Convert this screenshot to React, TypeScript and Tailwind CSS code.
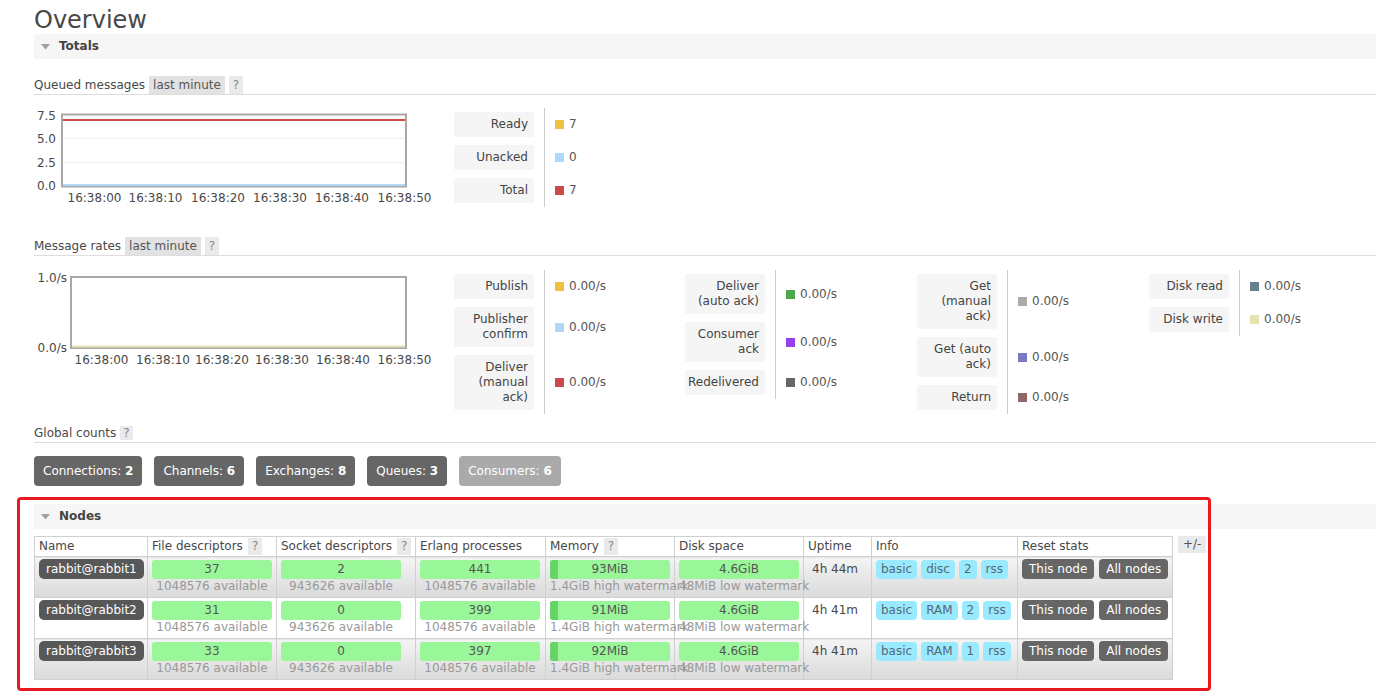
import React from "react";

type LegendItem = { lines: string[]; swatch: string; value: string };

function Legend({ items, width, top }: { items: LegendItem[]; width: string; top: string }) {
  return (
    <div className={`flex shrink-0 flex-col ${width} ${top}`}>
      {items.map((it, i) => (
        <div key={i} className="flex items-stretch">
          <div className="py-[4px]">
            <div className="w-[80px] rounded-[2px] bg-[#f5f5f5] py-[5px] pl-[2px] pr-[6px] text-right leading-[15px] text-[#444]">
              {it.lines.map((l, j) => (
                <div key={j} className="whitespace-nowrap">
                  {l}
                </div>
              ))}
            </div>
          </div>
          <div className="ml-[10px] flex items-center border-l border-[#cccccc] pl-[10px]">
            <span className={`inline-block h-[9px] w-[9px] ${it.swatch}`} />
            <span className="ml-[5px] text-[#555]">{it.value}</span>
          </div>
        </div>
      ))}
    </div>
  );
}

function SectionBar({ title, className = "" }: { title: string; className?: string }) {
  return (
    <div className={`flex h-[25px] items-center bg-[#f6f6f6] ${className}`}>
      <svg width="9" height="6" viewBox="0 0 9 6" className="ml-[7px]">
        <polygon points="0,0 9,0 4.5,5.5" fill="#a0a0a0" />
      </svg>
      <span className="ml-[9px] font-bold text-[#444]">{title}</span>
    </div>
  );
}

function SubHeader({ title, range, className = "" }: { title: string; range?: boolean; className?: string }) {
  return (
    <div className={`flex h-[19px] items-center border-b border-[#dddddd] ${className}`}>
      <span className="text-[#484848]">{title}</span>
      {range ? (
        <>
          <span className="ml-[4px] h-[18px] self-start bg-[#e2e2e2] px-[4px] leading-[18px] text-[#555]">last minute</span>
          <span className="ml-[4px] h-[18px] self-start bg-[#eaeaea] px-[4px] leading-[18px] text-[#888]">?</span>
        </>
      ) : (
        <span className="ml-[4px] h-[14px] bg-[#eaeaea] px-[3px] leading-[14px] text-[#888]">?</span>
      )}
    </div>
  );
}

const txt = { fontFamily: "DejaVu Sans, Verdana, sans-serif", fontSize: 12, fill: "#484848" } as const;

function QueuedChart() {
  const xs = [60.5, 121.5, 184, 246, 308, 370.5];
  return (
    <svg width="420" height="100" viewBox="0 0 420 100">
      <text x={22} y={10} textAnchor="end" dominantBaseline="central" {...txt}>7.5</text>
      <text x={22} y={32.5} textAnchor="end" dominantBaseline="central" {...txt}>5.0</text>
      <text x={22} y={56.5} textAnchor="end" dominantBaseline="central" {...txt}>2.5</text>
      <text x={22} y={80} textAnchor="end" dominantBaseline="central" {...txt}>0.0</text>
      <rect x={28} y={8.5} width={344} height={72} fill="#fff" stroke="#a8a8a8" strokeWidth={2} />
      <line x1={29} x2={371} y1={32.3} y2={32.3} stroke="#eeeeee" strokeWidth={1} />
      <line x1={29} x2={371} y1={56.7} y2={56.7} stroke="#eeeeee" strokeWidth={1} />
      <line x1={29} x2={371} y1={79} y2={79} stroke="#afd8f8" strokeWidth={2} />
      <line x1={29} x2={371} y1={14} y2={14} stroke="#edc240" strokeWidth={2} />
      <line x1={29} x2={371} y1={14} y2={14} stroke="#cb4b4b" strokeWidth={2} />
      {xs.map((x, i) => (
        <text key={i} x={x} y={92} textAnchor="middle" dominantBaseline="central" {...txt}>
          {`16:38:${i}0`}
        </text>
      ))}
    </svg>
  );
}

function RatesChart() {
  const xs = [67.5, 129, 188, 248, 309, 370.5];
  return (
    <svg width="420" height="100" viewBox="0 0 420 100">
      <text x={33} y={11} textAnchor="end" dominantBaseline="central" {...txt}>1.0/s</text>
      <text x={33} y={81} textAnchor="end" dominantBaseline="central" {...txt}>0.0/s</text>
      <rect x={37} y={10} width={335} height={71} fill="#fff" stroke="#a8a8a8" strokeWidth={2} />
      <line x1={38} x2={371} y1={79.5} y2={79.5} stroke="#e5e4ae" strokeWidth={2} />
      {xs.map((x, i) => (
        <text key={i} x={x} y={93} textAnchor="middle" dominantBaseline="central" {...txt}>
          {`16:38:${i}0`}
        </text>
      ))}
    </svg>
  );
}

const nodes = [
  { name: "rabbit@rabbit1", fd: "37", sd: "2", ep: "441", mem: "93MiB", up: "4h 44m", info: ["basic", "disc", "2", "rss"] },
  { name: "rabbit@rabbit2", fd: "31", sd: "0", ep: "399", mem: "91MiB", up: "4h 41m", info: ["basic", "RAM", "2", "rss"] },
  { name: "rabbit@rabbit3", fd: "33", sd: "0", ep: "397", mem: "92MiB", up: "4h 41m", info: ["basic", "RAM", "1", "rss"] },
];

function Bar({ value, sub, mem }: { value: string; sub: string; mem?: boolean }) {
  return (
    <div className="w-[120px]">
      <div className="relative h-[19px] overflow-hidden rounded-[3px] bg-[#99f799] text-center leading-[19px] text-[#555]">
        {mem && <div className="absolute left-0 top-0 h-full w-[8px] bg-[#66d466]" />}
        <span className="relative">{value}</span>
      </div>
      <div className="whitespace-nowrap text-center leading-[15px] text-[#999]">{sub}</div>
    </div>
  );
}

function Th({ children, q }: { children: React.ReactNode; q?: boolean }) {
  return (
    <th className="border border-[#d0d0d0] bg-white p-0 px-[4px] text-left font-normal">
      <div className="flex h-[19px] items-center whitespace-nowrap text-[#484848]">
        {children}
        {q && <span className="ml-[5px] h-[17px] bg-[#eaeaea] px-[4px] leading-[17px] text-[#888]">?</span>}
      </div>
    </th>
  );
}

export default function App() {
  const rowBg = (i: number) => (i % 2 === 0 ? "bg-[linear-gradient(#f4f4f4,#dadada)]" : "bg-white");
  const td = "border border-[#d0d0d0] px-[4px] py-[3px] align-top";
  return (
    <div className="relative min-h-[697px] w-full overflow-hidden bg-white pl-[34px] pt-[6px] font-['DejaVu_Sans',Verdana,sans-serif] text-[12px] leading-[15px] text-[#484848]">
      <h1 className="text-[24px] font-normal leading-[28px] text-[#484848]">Overview</h1>
      <SectionBar title="Totals" />

      <SubHeader title="Queued messages" range className="mt-[17px]" />
      <div className="flex items-start">
        <div className="mt-[11px] w-[420px] shrink-0">
          <QueuedChart />
        </div>
        <Legend
          width="w-[231px]"
          top="mt-[13px]"
          items={[
            { lines: ["Ready"], swatch: "bg-[#edc240]", value: "7" },
            { lines: ["Unacked"], swatch: "bg-[#afd8f8]", value: "0" },
            { lines: ["Total"], swatch: "bg-[#cb4b4b]", value: "7" },
          ]}
        />
      </div>

      <SubHeader title="Message rates" range className="mt-[30px]" />
      <div className="flex items-start">
        <div className="mt-[11px] w-[420px] shrink-0">
          <RatesChart />
        </div>
        <Legend
          width="w-[231px]"
          top="mt-[14px]"
          items={[
            { lines: ["Publish"], swatch: "bg-[#edc240]", value: "0.00/s" },
            { lines: ["Publisher", "confirm"], swatch: "bg-[#afd8f8]", value: "0.00/s" },
            { lines: ["Deliver", "(manual", "ack)"], swatch: "bg-[#cb4b4b]", value: "0.00/s" },
          ]}
        />
        <Legend
          width="w-[232px]"
          top="mt-[14px]"
          items={[
            { lines: ["Deliver", "(auto ack)"], swatch: "bg-[#4da74d]", value: "0.00/s" },
            { lines: ["Consumer", "ack"], swatch: "bg-[#9440ed]", value: "0.00/s" },
            { lines: ["Redelivered"], swatch: "bg-[#666666]", value: "0.00/s" },
          ]}
        />
        <Legend
          width="w-[232px]"
          top="mt-[14px]"
          items={[
            { lines: ["Get", "(manual", "ack)"], swatch: "bg-[#aaaaaa]", value: "0.00/s" },
            { lines: ["Get (auto", "ack)"], swatch: "bg-[#7c79c3]", value: "0.00/s" },
            { lines: ["Return"], swatch: "bg-[#8e6767]", value: "0.00/s" },
          ]}
        />
        <Legend
          width="w-[232px]"
          top="mt-[14px]"
          items={[
            { lines: ["Disk read"], swatch: "bg-[#67808e]", value: "0.00/s" },
            { lines: ["Disk write"], swatch: "bg-[#e5e4ae]", value: "0.00/s" },
          ]}
        />
      </div>

      <SubHeader title="Global counts" className="mt-[10px]" />
      <div className="mt-[13px] flex gap-[12px]">
        {[
          ["Connections:", "2", "bg-[#666666]"],
          ["Channels:", "6", "bg-[#666666]"],
          ["Exchanges:", "8", "bg-[#666666]"],
          ["Queues:", "3", "bg-[#666666]"],
          ["Consumers:", "6", "bg-[#aaaaaa]"],
        ].map(([l, n, bg]) => (
          <div key={l} className={`flex h-[30px] items-center whitespace-pre rounded-[4px] px-[9px] text-white ${bg}`}>
            {l} <b className="font-bold">{n}</b>
          </div>
        ))}
      </div>

      <SectionBar title="Nodes" className="mt-[18px]" />
      <div className="mt-[7px] flex items-start gap-[5px]">
        <table className="w-[1138px] table-fixed border-collapse border border-[#cccccc]">
          <colgroup>
            <col className="w-[113px]" />
            <col className="w-[129px]" />
            <col className="w-[139px]" />
            <col className="w-[130px]" />
            <col className="w-[129px]" />
            <col className="w-[129px]" />
            <col className="w-[68px]" />
            <col className="w-[146px]" />
            <col className="w-[155px]" />
          </colgroup>
          <thead>
            <tr>
              <Th>Name</Th>
              <Th q>File descriptors</Th>
              <Th q>Socket descriptors</Th>
              <Th>Erlang processes</Th>
              <Th q>Memory</Th>
              <Th>Disk space</Th>
              <Th>Uptime</Th>
              <Th>Info</Th>
              <Th>Reset stats</Th>
            </tr>
          </thead>
          <tbody>
            {nodes.map((n, i) => (
              <tr key={n.name}>
                <td className={`${td} ${rowBg(i)}`}>
                  <span className="-mt-[1px] inline-block h-[20px] whitespace-nowrap rounded-[5px] bg-[#585858] px-[7px] leading-[20px] text-white">
                    {n.name}
                  </span>
                </td>
                <td className={`${td} ${rowBg(i)}`}>
                  <Bar value={n.fd} sub="1048576 available" />
                </td>
                <td className={`${td} ${rowBg(i)}`}>
                  <Bar value={n.sd} sub="943626 available" />
                </td>
                <td className={`${td} ${rowBg(i)}`}>
                  <Bar value={n.ep} sub="1048576 available" />
                </td>
                <td className={`${td} ${rowBg(i)}`}>
                  <Bar value={n.mem} sub="1.4GiB high watermark" mem />
                </td>
                <td className={`${td} ${rowBg(i)}`}>
                  <Bar value="4.6GiB" sub="48MiB low watermark" />
                </td>
                <td className={`${td} ${rowBg(i)}`}>
                  <div className="pl-[4px] leading-[19px] text-[#484848]">{n.up}</div>
                </td>
                <td className={`${td} ${rowBg(i)}`}>
                  <div className="flex gap-[4px]">
                    {n.info.map((b, j) => (
                      <span key={j} className="h-[19px] rounded-[4px] bg-[#99e9ff] px-[5px] leading-[19px] text-[#556a75]">
                        {b}
                      </span>
                    ))}
                  </div>
                </td>
                <td className={`${td} ${rowBg(i)}`}>
                  <div className="-mt-[1px] flex gap-[5px]">
                    <span className="h-[20px] whitespace-nowrap rounded-[4px] bg-[#666666] px-[7px] leading-[20px] text-white">This node</span>
                    <span className="h-[20px] whitespace-nowrap rounded-[4px] bg-[#666666] px-[7px] leading-[20px] text-white">All nodes</span>
                  </div>
                </td>
              </tr>
            ))}
          </tbody>
        </table>
        <span className="h-[17px] bg-[#eaeaea] px-[5px] leading-[17px] text-[#555]">+/-</span>
      </div>

      <div className="pointer-events-none absolute left-[17px] top-[497px] h-[194px] w-[1194px] rounded-[4px] border-[3px] border-[#e8191f]" />
    </div>
  );
}
